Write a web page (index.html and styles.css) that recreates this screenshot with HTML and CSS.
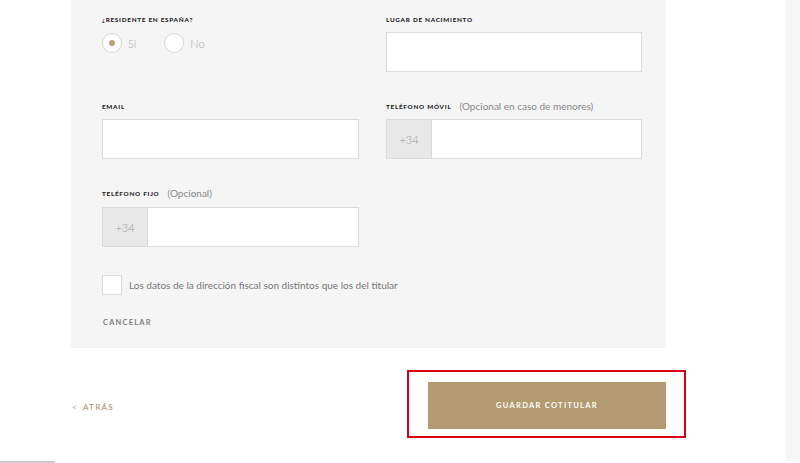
FILE: index.html
```html
<!DOCTYPE html>
<html lang="es">
<head>
<meta charset="utf-8">
<link rel="stylesheet" href="styles.css">
</head>
<body>
<div class="page">
  <main class="main">
    <section class="panel">
      <div class="grid">
        <div class="field">
          <div class="label"><span class="cap">¿Residente en España?</span></div>
          <div class="radios">
            <label class="radio"><span class="circle checked"></span><span class="rtext">Si</span></label>
            <label class="radio"><span class="circle"></span><span class="rtext">No</span></label>
          </div>
        </div>
        <div class="field">
          <div class="label"><span class="cap">Lugar de nacimiento</span></div>
          <div class="input"></div>
        </div>
        <div class="field">
          <div class="label"><span class="cap">Email</span></div>
          <div class="input"></div>
        </div>
        <div class="field">
          <div class="label"><span class="cap">Teléfono móvil</span><span class="opt">(Opcional en caso de menores)</span></div>
          <div class="input phone"><span class="prefix">+34</span></div>
        </div>
        <div class="field">
          <div class="label"><span class="cap">Teléfono fijo</span><span class="opt">(Opcional)</span></div>
          <div class="input phone"><span class="prefix">+34</span></div>
        </div>
      </div>
      <label class="check"><span class="box"></span><span class="ctext">Los datos de la dirección fiscal son distintos que los del titular</span></label>
      <div class="cancel">Cancelar</div>
    </section>
    <div class="actions">
      <a class="back"><span class="chev">&lt;</span>Atrás</a>
      <div class="highlight"><button class="save">Guardar cotitular</button></div>
    </div>
  </main>
  <aside class="rail"></aside>
</div>
<div class="footline"></div>
</body>
</html>
```

FILE: styles.css
```css
html, body {
  margin: 0;
  padding: 0;
  background: #fff;
  font-family: "Lato", "Open Sans", sans-serif;
  color: #888;
}
.page {
  display: flex;
  height: 461px;
  overflow: hidden;
}
.main {
  flex: 1;
  padding-left: 71px;
}
.rail {
  width: 14px;
  background: #f6f6f6;
}
.panel {
  width: 595px;
  height: 348px;
  box-sizing: border-box;
  background: #f5f5f5;
  padding: 12px 24px 0 31px;
}
.grid {
  display: grid;
  grid-template-columns: 257px 256px;
  column-gap: 27px;
  row-gap: 27px;
}
.field {
  display: flex;
  flex-direction: column;
}
.label {
  height: 14px;
  display: flex;
  align-items: center;
  margin-bottom: 6px;
}
.cap {
  font-family: "Lato", sans-serif;
  font-weight: 900;
  text-transform: uppercase;
  font-size: 6.3px;
  letter-spacing: 0.75px;
  color: #222;
}
.opt {
  font-size: 10px;
  color: #888;
  margin-left: 8px;
}
.input {
  height: 40px;
  box-sizing: border-box;
  border: 1px solid #dcdcdc;
  background: #fff;
  display: flex;
}
.field:nth-child(5) .input {
  margin-top: 1px;
}
.prefix {
  width: 44px;
  background: #e8e8e8;
  border-right: 1px solid #dcdcdc;
  display: flex;
  align-items: center;
  justify-content: center;
  font-size: 11px;
  font-weight: 300;
  color: #999;
}
.radios {
  display: flex;
  gap: 28px;
  margin-top: 1px;
}
.radio {
  display: flex;
  align-items: center;
  gap: 6px;
}
.circle {
  width: 20px;
  height: 20px;
  box-sizing: border-box;
  border: 1px solid #d6d6d6;
  border-radius: 50%;
  background: #fff;
  display: flex;
  align-items: center;
  justify-content: center;
}
.circle.checked::after {
  content: "";
  width: 6px;
  height: 6px;
  border-radius: 50%;
  background: #b8a07a;
}
.rtext {
  font-size: 11px;
  font-weight: 300;
  color: #aaa;
}
.check {
  display: flex;
  align-items: center;
  gap: 7px;
  margin-top: 28px;
}
.box {
  width: 20px;
  height: 20px;
  box-sizing: border-box;
  border: 1px solid #dcdcdc;
  background: #fff;
}
.ctext {
  font-size: 10px;
  color: #777;
}
.cancel {
  margin-top: 23px;
  font-size: 7.5px;
  letter-spacing: 1.2px;
  text-transform: uppercase;
  color: #808080;
  font-weight: 700;
  margin-left: 1px;
}
.actions {
  width: 615px;
  display: flex;
  align-items: center;
  justify-content: space-between;
  margin-top: 22px;
}
.back {
  font-size: 8px;
  letter-spacing: 1.3px;
  text-transform: uppercase;
  color: #a08e6a;
  font-weight: 400;
  display: flex;
  align-items: center;
  gap: 5px;
  margin-top: 6px;
  margin-left: 1px;
}
.chev {
  font-size: 8px;
  font-weight: 400;
}
.highlight {
  border: 2px solid #d9000f;
  padding: 10px 18px 7px 19px;
  margin-left: 1px;
}
.save {
  width: 238px;
  height: 47px;
  border: none;
  background: #b39a70;
  color: #fff;
  font-family: "Lato", sans-serif;
  font-weight: 700;
  font-size: 7.5px;
  letter-spacing: 1.3px;
  text-transform: uppercase;
  display: block;
}
.footline {
  width: 55px;
  height: 2px;
  background: #ccc;
}
```
